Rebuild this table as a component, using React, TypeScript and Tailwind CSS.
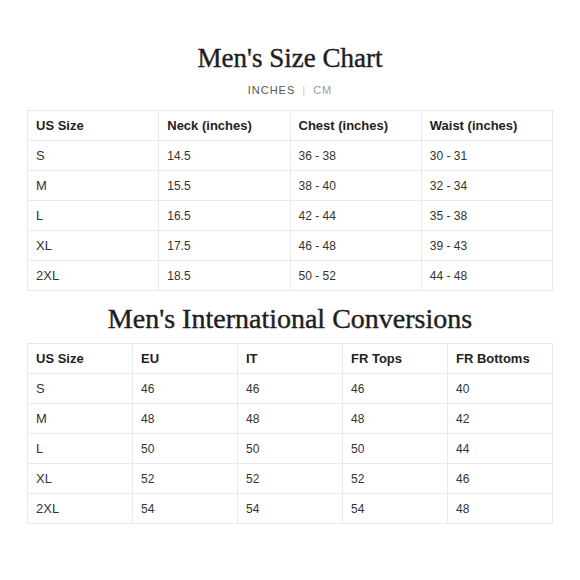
const sizeChart = {
  head: ["US Size", "Neck (inches)", "Chest (inches)", "Waist (inches)"],
  rows: [
    ["S", "14.5", "36 - 38", "30 - 31"],
    ["M", "15.5", "38 - 40", "32 - 34"],
    ["L", "16.5", "42 - 44", "35 - 38"],
    ["XL", "17.5", "46 - 48", "39 - 43"],
    ["2XL", "18.5", "50 - 52", "44 - 48"],
  ],
};

const conversions = {
  head: ["US Size", "EU", "IT", "FR Tops", "FR Bottoms"],
  rows: [
    ["S", "46", "46", "46", "40"],
    ["M", "48", "48", "48", "42"],
    ["L", "50", "50", "50", "44"],
    ["XL", "52", "52", "52", "46"],
    ["2XL", "54", "54", "54", "48"],
  ],
};

function SizeTable({ head, rows }: { head: string[]; rows: string[][] }) {
  return (
    <table className="w-full table-fixed border-collapse font-['Liberation_Sans',Arial,sans-serif]">
      <thead>
        <tr>
          {head.map((h) => (
            <th
              key={h}
              className="h-[30px] border border-[#e9e9e9] px-2 text-left align-middle text-[13px] font-bold text-[#222]"
            >
              {h}
            </th>
          ))}
        </tr>
      </thead>
      <tbody>
        {rows.map((row) => (
          <tr key={row[0]}>
            {row.map((cell, i) => (
              <td
                key={i}
                className={`h-[30px] border border-[#e9e9e9] px-2 align-middle text-[#333] ${
                  i === 0 ? "text-[13px]" : "text-[12px]"
                }`}
              >
                {cell}
              </td>
            ))}
          </tr>
        ))}
      </tbody>
    </table>
  );
}

export default function App() {
  return (
    <div className="min-h-[580px] w-[580px] bg-white px-[27px] pt-[42px]">
      <h1 className="text-center font-['Liberation_Serif','Times_New_Roman',serif] text-[27px] leading-[32px] text-[#1e1e1e] [-webkit-text-stroke:0.4px_#1e1e1e]">
        Men's Size Chart
      </h1>
      <div className="mt-2 flex items-center justify-center gap-[7px] font-['Liberation_Sans',Arial,sans-serif] text-[11px] leading-4 tracking-[0.09em]">
        <span className="text-[#555]">INCHES</span>
        <span className="text-[#ccc]">|</span>
        <span className="text-[#999]">CM</span>
      </div>
      <div className="mt-3">
        <SizeTable head={sizeChart.head} rows={sizeChart.rows} />
      </div>
      <h2 className="mt-3 text-center font-['Liberation_Serif','Times_New_Roman',serif] text-[28px] leading-[32px] text-[#1e1e1e] [-webkit-text-stroke:0.4px_#1e1e1e]">
        Men's International Conversions
      </h2>
      <div className="mt-2">
        <SizeTable head={conversions.head} rows={conversions.rows} />
      </div>
    </div>
  );
}
